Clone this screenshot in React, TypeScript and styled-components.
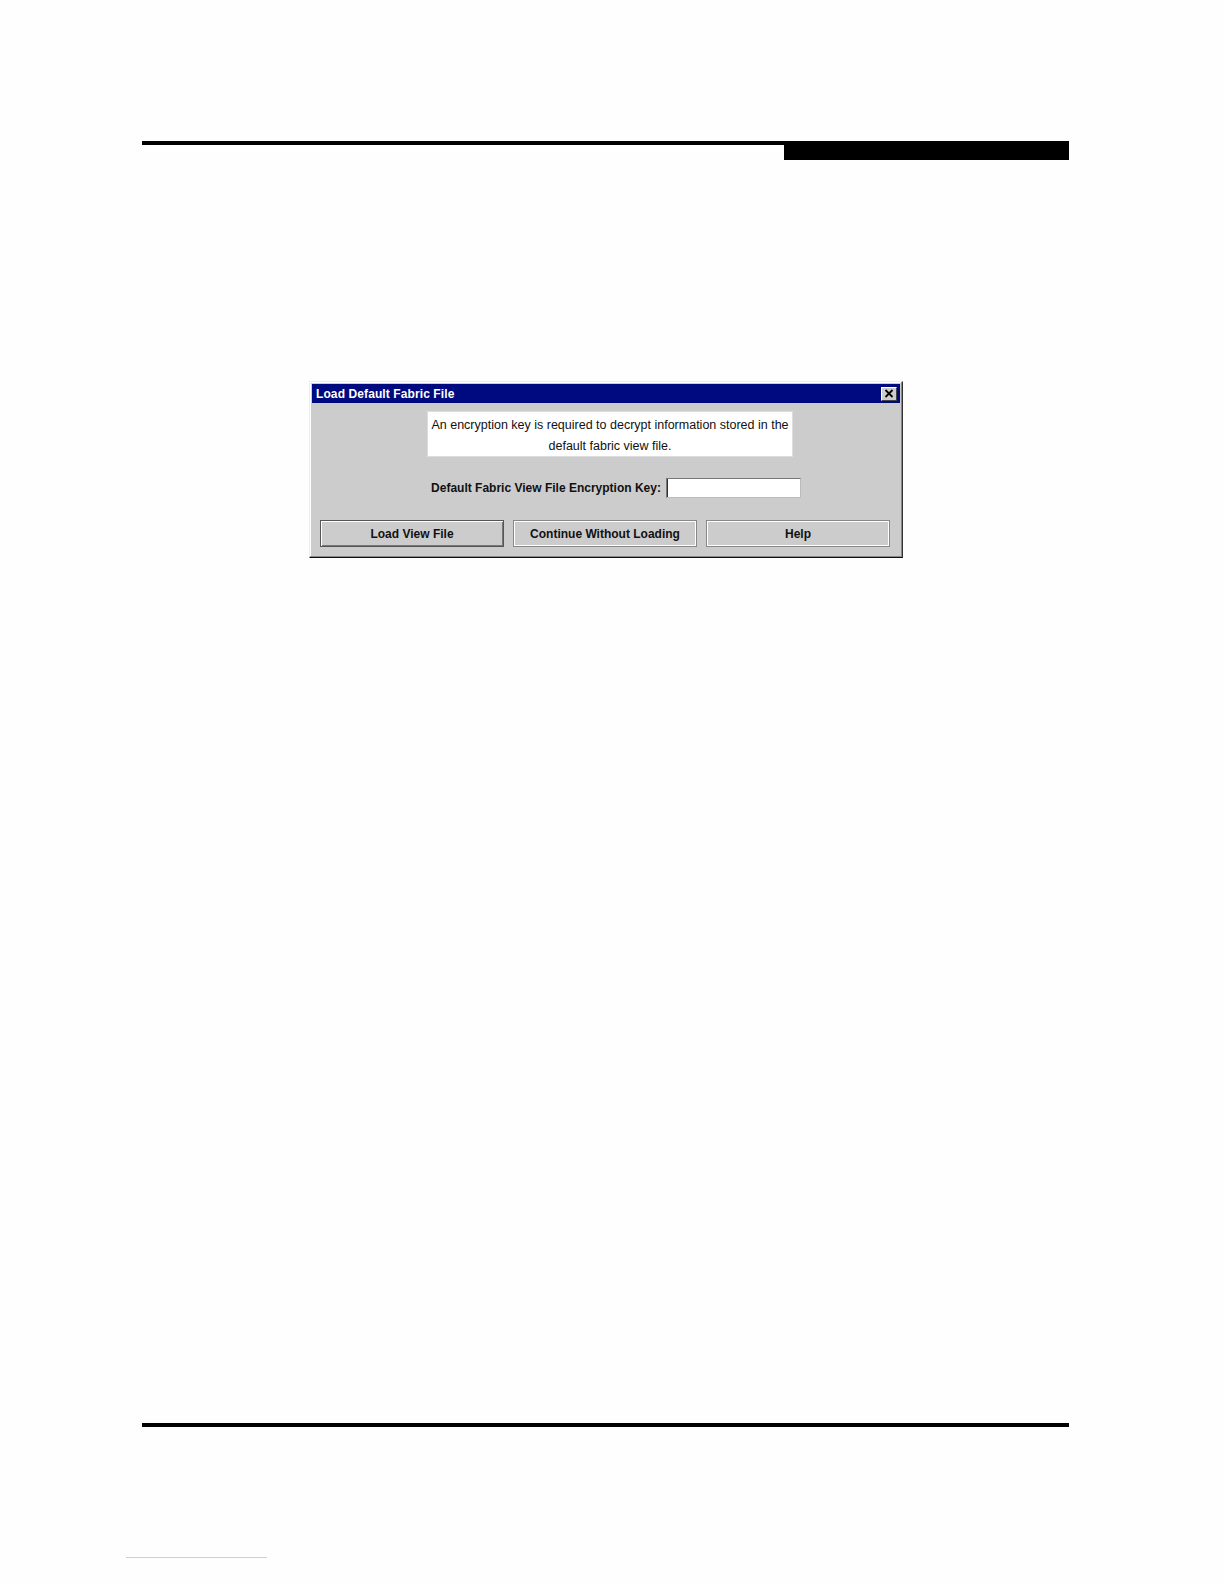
import React from "react";
import styled, { createGlobalStyle } from "styled-components";

const GlobalStyle = createGlobalStyle`
  html, body {
    margin: 0;
    padding: 0;
    background: #fefefe;
    overflow: hidden;
  }
  body {
    font-family: "Liberation Sans", Arial, sans-serif;
  }
`;

const Page = styled.div`
  padding: 141px 155px 0 142px;
  background: #fefefe;
`;

const HeaderRule = styled.div`
  display: flex;
  align-items: flex-start;
`;

const RuleLine = styled.div`
  flex: 1;
  height: 4px;
  background: #000;
`;

const RuleTab = styled.div`
  width: 285px;
  height: 19px;
  background: #000;
`;

const Main = styled.div`
  height: 1263px;
  box-sizing: border-box;
  padding: 221px 0 0 167px;
`;

const Dialog = styled.div`
  width: 594px;
  height: 177px;
  box-sizing: border-box;
  background: #cccccc;
  border: 1px solid;
  border-color: #eeeeee #333333 #111111 #eeeeee;
  box-shadow: inset -1px -1px 0 #888888, inset 1px 1px 0 #ffffff;
  padding: 2px;
  display: flex;
  flex-direction: column;
`;

const TitleBar = styled.div`
  height: 19px;
  background: #000a80;
  display: flex;
  align-items: center;
  justify-content: space-between;
  padding: 0 3px 0 4px;
`;

const Title = styled.span`
  color: #ffffff;
  font-weight: bold;
  font-size: 12px;
  letter-spacing: 0.1px;
`;

const CloseButton = styled.div`
  width: 16px;
  height: 14px;
  box-sizing: border-box;
  background: #cccccc;
  border: 1px solid;
  border-color: #ffffff #444444 #444444 #ffffff;
  display: flex;
  align-items: center;
  justify-content: center;
`;

const Body = styled.div`
  flex: 1;
  display: flex;
  flex-direction: column;
  align-items: center;
  padding: 8px 10px 0 8px;
`;

const MessageBox = styled.div`
  width: 366px;
  height: 46px;
  box-sizing: border-box;
  padding-top: 3px;
  background: #ffffff;
  border: 1px solid #dddddd;
  display: flex;
  flex-direction: column;
  align-items: center;
  justify-content: center;
  font-size: 12.5px;
  line-height: 21px;
  color: #111;
  margin-left: 10px;
`;

const KeyRow = styled.div`
  display: flex;
  align-items: center;
  gap: 5px;
  margin-top: 21px;
  margin-left: 22px;
`;

const KeyLabel = styled.label`
  font-size: 12px;
  font-weight: bold;
  color: #111;
`;

const KeyInput = styled.input`
  width: 135px;
  height: 20px;
  box-sizing: border-box;
  border: 1px solid;
  border-color: #777777 #bbbbbb #bbbbbb #777777;
  background: #ffffff;
  padding: 0 2px;
  outline: none;
  box-shadow: inset 1px 0 0 #333333;
`;

const ButtonRow = styled.div`
  display: flex;
  gap: 9px;
  margin-top: 22px;
  align-self: stretch;
`;

const Button = styled.button<{ $focused?: boolean }>`
  width: 184px;
  height: 27px;
  box-sizing: border-box;
  background: #cccccc;
  font-family: "Liberation Sans", Arial, sans-serif;
  font-size: 12px;
  font-weight: bold;
  color: #111;
  padding: 0;
  border: 1px solid;
  border-color: ${(p) => (p.$focused ? "#555555" : "#888888")};
  box-shadow: ${(p) =>
    p.$focused
      ? "inset 1px 1px 0 #ffffff, inset -1px -1px 0 #777777"
      : "inset 1px 1px 0 #ffffff, inset -1px -1px 0 #ffffff"};
`;

const FooterRule = styled.div`
  height: 4px;
  background: #000;
`;

const FooterLink = styled.div`
  width: 141px;
  height: 1px;
  margin: 130px 0 0 -16px;
  background: #c8cde8;
`;

export default function App() {
  return (
    <>
      <GlobalStyle />
      <Page>
        <HeaderRule>
          <RuleLine />
          <RuleTab />
        </HeaderRule>
        <Main>
          <Dialog>
            <TitleBar>
              <Title>Load Default Fabric File</Title>
              <CloseButton>
                <svg width="10" height="9" viewBox="0 0 10 9">
                  <path d="M1.5 1 L8.5 8 M8.5 1 L1.5 8" stroke="#000" strokeWidth="1.8" />
                </svg>
              </CloseButton>
            </TitleBar>
            <Body>
              <MessageBox>
                <span>An encryption key is required to decrypt information stored in the</span>
                <span>default fabric view file.</span>
              </MessageBox>
              <KeyRow>
                <KeyLabel>Default Fabric View File Encryption Key:</KeyLabel>
                <KeyInput type="text" />
              </KeyRow>
              <ButtonRow>
                <Button $focused>Load View File</Button>
                <Button>Continue Without Loading</Button>
                <Button>Help</Button>
              </ButtonRow>
            </Body>
          </Dialog>
        </Main>
        <FooterRule />
        <FooterLink />
      </Page>
    </>
  );
}
